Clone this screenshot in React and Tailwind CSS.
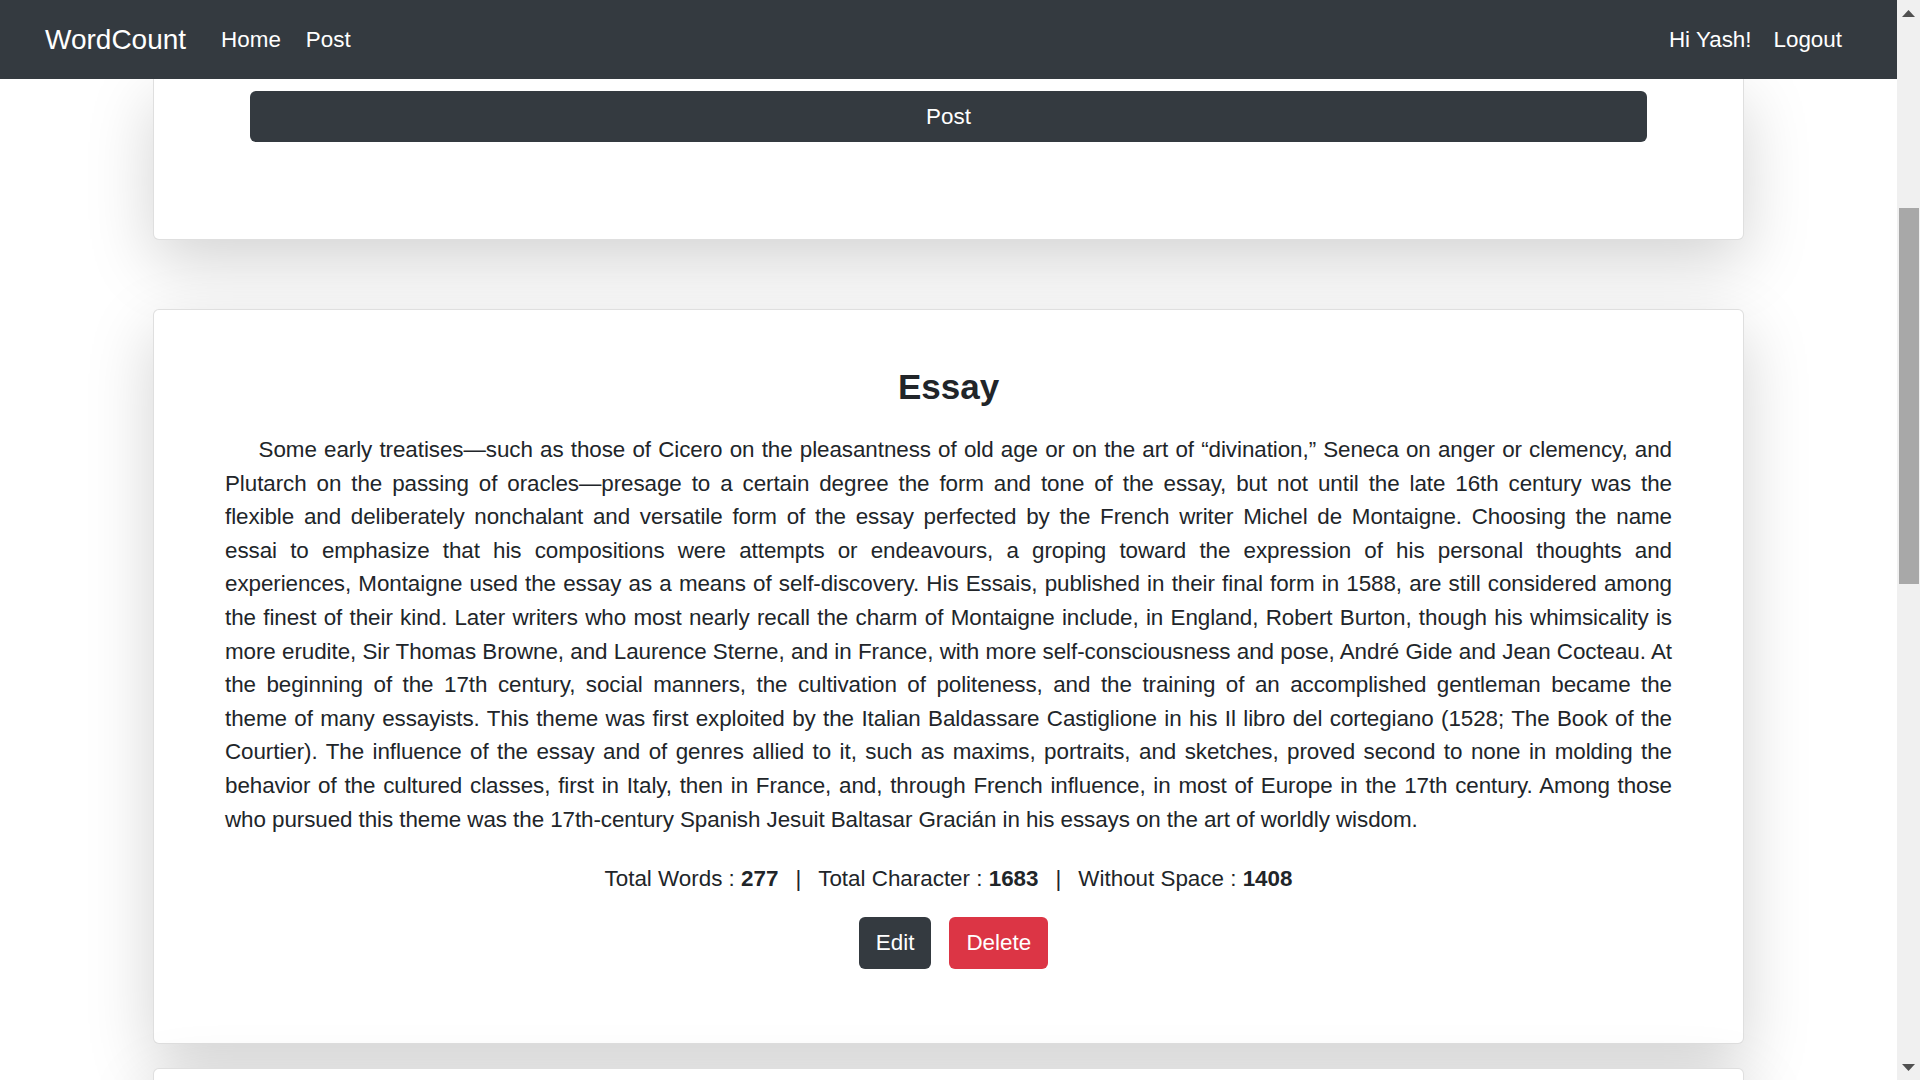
import React from 'react';

const essayLines = [
  'Some early treatises—such as those of Cicero on the pleasantness of old age or on the art of “divination,” Seneca on anger or clemency, and',
  'Plutarch on the passing of oracles—presage to a certain degree the form and tone of the essay, but not until the late 16th century was the',
  'flexible and deliberately nonchalant and versatile form of the essay perfected by the French writer Michel de Montaigne. Choosing the name',
  'essai to emphasize that his compositions were attempts or endeavours, a groping toward the expression of his personal thoughts and',
  'experiences, Montaigne used the essay as a means of self-discovery. His Essais, published in their final form in 1588, are still considered among',
  'the finest of their kind. Later writers who most nearly recall the charm of Montaigne include, in England, Robert Burton, though his whimsicality is',
  'more erudite, Sir Thomas Browne, and Laurence Sterne, and in France, with more self-consciousness and pose, André Gide and Jean Cocteau. At',
  'the beginning of the 17th century, social manners, the cultivation of politeness, and the training of an accomplished gentleman became the',
  'theme of many essayists. This theme was first exploited by the Italian Baldassare Castiglione in his Il libro del cortegiano (1528; The Book of the',
  'Courtier). The influence of the essay and of genres allied to it, such as maxims, portraits, and sketches, proved second to none in molding the',
  'behavior of the cultured classes, first in Italy, then in France, and, through French influence, in most of Europe in the 17th century. Among those',
  'who pursued this theme was the 17th-century Spanish Jesuit Baltasar Gracián in his essays on the art of worldly wisdom.',
];

const Navbar = () => (
  <nav className="relative z-10 flex h-[79px] shrink-0 items-center justify-between bg-[#343a40] pl-[45px] pr-[55px] text-white">
    <div className="flex items-center">
      <a href="#" className="text-[28px]">WordCount</a>
      <a href="#" className="ml-[35px] text-[22.4px]">Home</a>
      <a href="#" className="ml-[25px] text-[22.4px]">Post</a>
    </div>
    <div className="flex items-center text-[22.4px]">
      <span>Hi Yash!</span>
      <a href="#" className="ml-[22px]">Logout</a>
    </div>
  </nav>
);

const Stat = ({ label, value }) => (
  <span>
    {label} : <b className="font-bold">{value}</b>
  </span>
);

const EssayCard = () => (
  <div className="mx-[153px] mt-[69px] rounded-[6px] border border-black/[0.125] bg-white px-[71px] pt-[53px] pb-[74px] shadow-[0_22px_67px_rgba(0,0,0,0.175)]">
    <h3 className="text-center text-[35px] font-semibold leading-[47px]">Essay</h3>
    <p className="mt-[23px] text-[22.4px] leading-[33.6px] tracking-[-0.07px]">
      {essayLines.map((line, i) => (
        <span
          key={i}
          className={
            i === essayLines.length - 1
              ? 'block whitespace-nowrap text-left'
              : i === 0
                ? 'block whitespace-nowrap indent-[33.6px] text-justify [text-align-last:justify]'
                : 'block whitespace-nowrap text-justify [text-align-last:justify]'
          }
        >
          {line}
        </span>
      ))}
    </p>
    <div className="mt-[26px] text-center text-[22.4px] leading-[33.6px]">
      <Stat label="Total Words" value="277" />
      <span className="px-[17px]">|</span>
      <Stat label="Total Character" value="1683" />
      <span className="px-[17px]">|</span>
      <Stat label="Without Space" value="1408" />
    </div>
    <div className="mt-[21px] flex justify-center gap-[18px] pl-[10px]">
      <button className="h-[52px] rounded-[6px] bg-[#343a40] px-[17px] text-[22.4px] text-white">Edit</button>
      <button className="h-[52px] rounded-[6px] bg-[#dc3545] px-[17px] text-[22.4px] text-white">Delete</button>
    </div>
  </div>
);

const Scrollbar = () => (
  <div className="flex w-[23px] shrink-0 flex-col bg-[#f0f0f0]">
    <div className="flex justify-center pt-[10px]">
      <svg width="13" height="7" viewBox="0 0 13 7">
        <polygon points="6.5,0 13,7 0,7" fill="#505050" />
      </svg>
    </div>
    <div className="ml-[2px] mt-[191px] h-[376px] w-[20px] bg-[#a8a8a8]" />
    <div className="flex-1" />
    <div className="flex justify-center pb-[9px]">
      <svg width="13" height="7" viewBox="0 0 13 7">
        <polygon points="0,0 13,0 6.5,7" fill="#505050" />
      </svg>
    </div>
  </div>
);

const App = () => {
  return (
    <div className="flex h-[1080px] w-[1920px] overflow-hidden bg-white font-['Liberation_Sans',Arial,sans-serif] text-[#212529]">
      <div className="flex min-w-0 flex-1 flex-col">
        <Navbar />
        <div className="flex-1 overflow-hidden">
          <div className="mx-[153px] rounded-b-[6px] border border-t-0 border-black/[0.125] bg-white px-[96px] pt-[12px] pb-[97px] shadow-[0_22px_67px_rgba(0,0,0,0.175)]">
            <button className="h-[51px] w-full rounded-[6px] bg-[#343a40] text-[22.4px] text-white">Post</button>
          </div>
          <EssayCard />
          <div className="mx-[153px] mt-[24px] h-[400px] rounded-[6px] border border-black/[0.125] bg-white shadow-[0_22px_67px_rgba(0,0,0,0.175)]" />
        </div>
      </div>
      <Scrollbar />
    </div>
  );
};

export default App;
